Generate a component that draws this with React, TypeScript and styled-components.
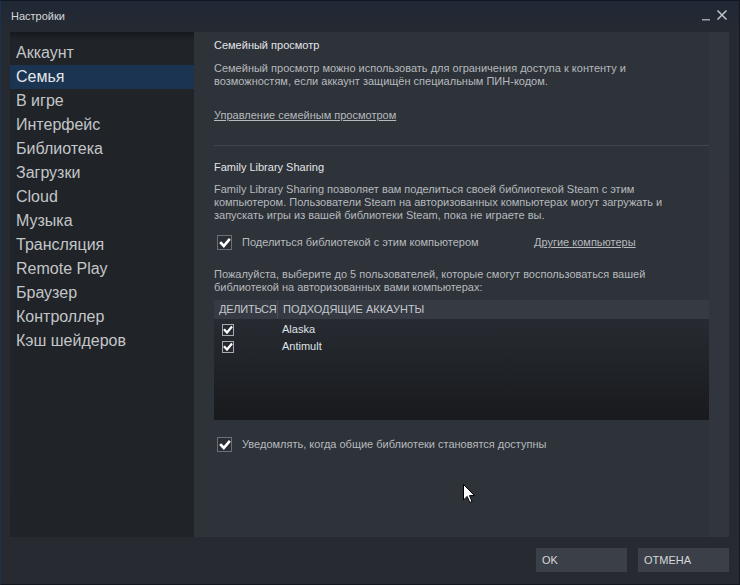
import styled, { createGlobalStyle } from "styled-components";

const GlobalStyle = createGlobalStyle`
  html, body {
    margin: 0;
    padding: 0;
    background: #272a30;
  }
  * {
    box-sizing: border-box;
  }
`;

const Window = styled.div`
  position: relative;
  width: 740px;
  height: 585px;
  display: flex;
  flex-direction: column;
  background: linear-gradient(#1f2836 0px, #262a31 32px, #272a30 100%);
  border: 1px solid #14181e;
  border-left-color: #1c3150;
  font-family: "Liberation Sans", Arial, sans-serif;
  overflow: hidden;
`;

const TitleBar = styled.div`
  height: 31px;
  flex: none;
  display: flex;
  align-items: center;
  padding: 0 10px 0 10px;
`;

const WindowTitle = styled.div`
  flex: 1;
  font-size: 11px;
  color: #d6d8da;
  margin-top: -2px;
`;

const TitleButton = styled.button`
  width: 14px;
  height: 14px;
  padding: 0;
  margin-left: 2px;
  border: none;
  background: none;
  display: flex;
  align-items: center;
  justify-content: center;
  margin-top: -4px;
`;

const Body = styled.div`
  flex: 1;
  display: flex;
  padding: 0 10px 0 9px;
  min-height: 0;
`;

const Sidebar = styled.nav`
  width: 184px;
  flex: none;
  padding-top: 9px;
  background: linear-gradient(#15181c 0px, #1c1f23 5px, #202327 9px, #202327 100%);
`;

const NavItem = styled.div<{ $active?: boolean }>`
  height: 24px;
  line-height: 24px;
  padding-left: 6px;
  font-size: 16px;
  color: ${(p) => (p.$active ? "#e4e6e8" : "#c3c6c9")};
  background: ${(p) => (p.$active ? "#1b3452" : "transparent")};
`;

const Panel = styled.div`
  flex: 1;
  display: flex;
  background: #2e3239;
`;

const Scroll = styled.div`
  flex: 1;
  padding: 7px 0 0 20px;
  font-size: 11px;
  line-height: 13px;
  color: #b6babe;
`;

const ScrollTrack = styled.div`
  width: 20px;
  flex: none;
  background: #31353d;
`;

const Heading = styled.div`
  color: #e2e5e8;
  font-size: 11px;
  line-height: 13px;
`;

const Paragraph = styled.p<{ $top: number }>`
  margin: ${(p) => p.$top}px 0 0;
  width: 485px;
`;

const TextLink = styled.a<{ $top?: number }>`
  display: inline-block;
  margin-top: ${(p) => p.$top ?? 0}px;
  color: #b6babe;
  text-decoration: underline;
  cursor: pointer;
`;

const Divider = styled.hr`
  margin: 23px 0 15px;
  border: none;
  border-top: 1px solid #41464e;
`;

const CheckRow = styled.label<{ $top: number }>`
  display: flex;
  align-items: center;
  height: 15px;
  margin-top: ${(p) => p.$top}px;
  padding-left: 3px;
`;

const CheckText = styled.span<{ $width?: number }>`
  margin-left: 10px;
  width: ${(p) => (p.$width ? `${p.$width}px` : "auto")};
`;

const BigBox = styled.span`
  width: 15px;
  height: 15px;
  flex: none;
  border: 1px solid #6c7076;
  background: #2a2e35;
  display: flex;
  align-items: center;
  justify-content: center;
`;

const SmallBox = styled.span`
  width: 12px;
  height: 12px;
  flex: none;
  border: 1px solid #a8acb0;
  background: #262a30;
  display: flex;
  align-items: center;
  justify-content: center;
`;

const Table = styled.div`
  margin-top: 6px;
  height: 120px;
  display: flex;
  flex-direction: column;
  background: linear-gradient(#2a2e35, #181a1d);
`;

const TableHead = styled.div`
  height: 19px;
  flex: none;
  display: flex;
  align-items: center;
  background: #353a43;
  color: #c4c8cc;
  font-size: 11px;
  text-transform: uppercase;
`;

const HeadCell = styled.div<{ $width?: number; $tight?: boolean }>`
  width: ${(p) => (p.$width ? `${p.$width}px` : "auto")};
  padding-left: 5px;
  line-height: 17px;
  white-space: nowrap;
  overflow: hidden;
  letter-spacing: ${(p) => (p.$tight ? "-0.25px" : "0")};
`;

const HeadSep = styled.div`
  width: 1px;
  height: 17px;
  background: #4a4f58;
`;

const TableBody = styled.div`
  padding-top: 2px;
`;

const AccountRow = styled.div`
  height: 17px;
  display: flex;
  align-items: center;
  color: #dfe2e5;
`;

const AccountCheck = styled.div`
  width: 68px;
  padding-left: 8px;
`;

const Footer = styled.div`
  height: 47px;
  flex: none;
  display: flex;
  justify-content: flex-end;
  gap: 11px;
  padding: 11px 10px 0 0;
`;

const Button = styled.button`
  width: 91px;
  height: 24px;
  border: none;
  background: #3a3f48;
  color: #d6d9dc;
  font-family: "Liberation Sans", Arial, sans-serif;
  font-size: 11px;
  text-align: left;
  padding: 0 6px;
  cursor: pointer;
`;

const Pointer = styled.svg`
  position: absolute;
  left: 462px;
  top: 483px;
`;

const Check = ({ size }: { size: number }) => (
  <svg width={size} height={size} viewBox="0 0 12 12">
    <path
      d="M2 6 L4.8 9 L10 2.8"
      fill="none"
      stroke="#ffffff"
      strokeWidth="2.6"
      strokeLinecap="square"
    />
  </svg>
);

const nav = [
  "Аккаунт",
  "Семья",
  "В игре",
  "Интерфейс",
  "Библиотека",
  "Загрузки",
  "Cloud",
  "Музыка",
  "Трансляция",
  "Remote Play",
  "Браузер",
  "Контроллер",
  "Кэш шейдеров",
];

const accounts = ["Alaska", "Antimult"];

export default function App() {
  return (
    <>
      <GlobalStyle />
      <Window>
        <TitleBar>
          <WindowTitle>Настройки</WindowTitle>
          <TitleButton aria-label="Свернуть">
            <svg width="10" height="14" viewBox="0 0 10 14">
              <rect x="1" y="11" width="8" height="1.5" fill="#9ea2a7" />
            </svg>
          </TitleButton>
          <TitleButton aria-label="Закрыть">
            <svg width="12" height="12" viewBox="0 0 12 12">
              <path d="M1.5 1.5 L10.5 10.5 M10.5 1.5 L1.5 10.5" stroke="#c2c5c8" strokeWidth="1.5" />
            </svg>
          </TitleButton>
        </TitleBar>
        <Body>
          <Sidebar>
            {nav.map((item) => (
              <NavItem key={item} $active={item === "Семья"}>
                {item}
              </NavItem>
            ))}
          </Sidebar>
          <Panel>
            <Scroll>
              <Heading>Семейный просмотр</Heading>
              <Paragraph $top={10}>
                Семейный просмотр можно использовать для ограничения доступа к контенту и
                возможностям, если аккаунт защищён специальным ПИН-кодом.
              </Paragraph>
              <TextLink $top={21}>Управление семейным просмотром</TextLink>
              <Divider />
              <Heading>Family Library Sharing</Heading>
              <Paragraph $top={9}>
                Family Library Sharing позволяет вам поделиться своей библиотекой Steam с этим
                компьютером. Пользователи Steam на авторизованных компьютерах могут загружать и
                запускать игры из вашей библиотеки Steam, пока не играете вы.
              </Paragraph>
              <CheckRow $top={13}>
                <BigBox>
                  <Check size={12} />
                </BigBox>
                <CheckText $width={292}>Поделиться библиотекой с этим компьютером</CheckText>
                <TextLink>Другие компьютеры</TextLink>
              </CheckRow>
              <Paragraph $top={18}>
                Пожалуйста, выберите до 5 пользователей, которые смогут воспользоваться вашей
                библиотекой на авторизованных вами компьютерах:
              </Paragraph>
              <Table>
                <TableHead>
                  <HeadCell $width={63} $tight>
                    Делиться
                  </HeadCell>
                  <HeadSep />
                  <HeadCell>Подходящие аккаунты</HeadCell>
                </TableHead>
                <TableBody>
                  {accounts.map((name) => (
                    <AccountRow key={name}>
                      <AccountCheck>
                        <SmallBox>
                          <Check size={10} />
                        </SmallBox>
                      </AccountCheck>
                      {name}
                    </AccountRow>
                  ))}
                </TableBody>
              </Table>
              <CheckRow $top={17}>
                <BigBox>
                  <Check size={12} />
                </BigBox>
                <CheckText>Уведомлять, когда общие библиотеки становятся доступны</CheckText>
              </CheckRow>
            </Scroll>
            <ScrollTrack />
          </Panel>
        </Body>
        <Footer>
          <Button>OK</Button>
          <Button>ОТМЕНА</Button>
        </Footer>
        <Pointer width="13" height="20" viewBox="0 0 13 20">
          <path
            d="M0.5 0.5 L0.5 16 L4.2 12.4 L6.8 18.5 L9 17.6 L6.5 11.6 L11.5 11.6 Z"
            fill="#ffffff"
            stroke="#000000"
            strokeWidth="1"
          />
        </Pointer>
      </Window>
    </>
  );
}
